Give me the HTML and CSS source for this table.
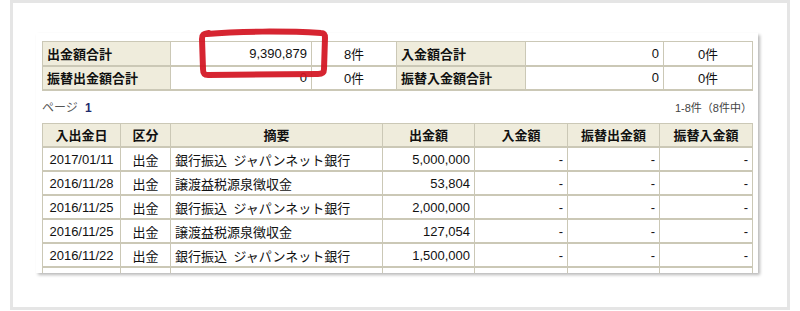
FILE: index.html
```html
<!DOCTYPE html>
<html lang="ja">
<head>
<meta charset="utf-8">
<link rel="stylesheet" href="styles.css">
</head>
<body>
<div class="frame">
  <div class="panel">
    <table class="summary">
      <colgroup><col style="width:128px"><col style="width:141px"><col style="width:85px"><col style="width:129px"><col style="width:138px"><col style="width:89px"></colgroup>
      <tr><th>出金額合計</th><td class="num">9,390,879</td><td class="cnt">8件</td><th>入金額合計</th><td class="num">0</td><td class="cnt">0件</td></tr>
      <tr><th>振替出金額合計</th><td class="num">0</td><td class="cnt">0件</td><th>振替入金額合計</th><td class="num">0</td><td class="cnt">0件</td></tr>
    </table>
    <div class="pager"><span class="page">ページ <b>1</b></span><span class="range">1-8件（8件中）</span></div>
    <table class="list">
      <colgroup><col style="width:78px"><col style="width:50px"><col style="width:212px"><col style="width:92px"><col style="width:93px"><col style="width:92px"><col style="width:93px"></colgroup>
      <tr><th>入出金日</th><th>区分</th><th>摘要</th><th>出金額</th><th>入金額</th><th>振替出金額</th><th>振替入金額</th></tr>
      <tr><td class="c">2017/01/11</td><td class="c">出金</td><td>銀行振込&ensp;ジャパンネット銀行</td><td class="num">5,000,000</td><td class="num">-</td><td class="num">-</td><td class="num">-</td></tr>
      <tr><td class="c">2016/11/28</td><td class="c">出金</td><td>譲渡益税源泉徴収金</td><td class="num">53,804</td><td class="num">-</td><td class="num">-</td><td class="num">-</td></tr>
      <tr><td class="c">2016/11/25</td><td class="c">出金</td><td>銀行振込&ensp;ジャパンネット銀行</td><td class="num">2,000,000</td><td class="num">-</td><td class="num">-</td><td class="num">-</td></tr>
      <tr><td class="c">2016/11/25</td><td class="c">出金</td><td>譲渡益税源泉徴収金</td><td class="num">127,054</td><td class="num">-</td><td class="num">-</td><td class="num">-</td></tr>
      <tr><td class="c">2016/11/22</td><td class="c">出金</td><td>銀行振込&ensp;ジャパンネット銀行</td><td class="num">1,500,000</td><td class="num">-</td><td class="num">-</td><td class="num">-</td></tr>
      <tr><td class="c">2016/11/22</td><td class="c">出金</td><td>譲渡益税源泉徴収金</td><td class="num">31,231</td><td class="num">-</td><td class="num">-</td><td class="num">-</td></tr>
    </table>
  </div>
  <svg class="mark" width="145" height="60" viewBox="0 0 145 60">
    <path d="M15 11 C45 8, 95 8, 129 10 C132 10, 133 12, 133 15 L132 46 C132 50, 130 51, 126 51 L16 52 C12 52, 11 50, 11 46 L10 16 C10 12, 11 11, 17 10" fill="none" stroke="#d2121f" stroke-width="6" stroke-linecap="round" stroke-linejoin="round" opacity="0.92"/>
  </svg>
</div>
</body>
</html>
```
FILE: styles.css
```css
html, body {
  margin: 0;
  padding: 0;
  background: #ffffff;
}
body {
  width: 800px;
  height: 311px;
  overflow: hidden;
  font-family: "Liberation Sans", "Noto Sans CJK JP", sans-serif;
  font-size: 13px;
  color: #111;
}
.frame {
  position: relative;
  box-sizing: border-box;
  margin-left: 10px;
  width: 780px;
  height: 310px;
  border: 3px solid #e5e5e5;
  background: #fff;
  padding: 30px 0 0 23px;
}
.panel {
  box-sizing: border-box;
  width: 722px;
  height: 240px;
  overflow: hidden;
  padding: 8px 6px 0 6px;
  background: #fff;
  box-shadow: 2px 2px 3px rgba(0, 0, 0, 0.28);
}
table {
  border-collapse: collapse;
  table-layout: fixed;
  width: 710px;
}
th, td {
  box-sizing: border-box;
  height: 24px;
  padding: 0 4px;
  border: 1px solid #cbc8b6;
  border-bottom: 2px solid #cbc8b6;
  white-space: nowrap;
  overflow: hidden;
  font-weight: normal;
}
.summary th {
  background: #efecdc;
  text-align: left;
  font-weight: bold;
}
.list th {
  background: #efecdc;
  text-align: center;
  font-weight: bold;
}
.num { text-align: right; }
.cnt, .c { text-align: center; }
.pager {
  height: 32px;
  display: flex;
  align-items: center;
  justify-content: space-between;
  font-size: 12px;
  color: #555;
}
.page b { color: #1d2a6b; margin-left: 4px; }
.range { font-size: 11px; color: #444; }
.mark {
  position: absolute;
  left: 179px;
  top: 20px;
  filter: blur(0.5px);
}
```
